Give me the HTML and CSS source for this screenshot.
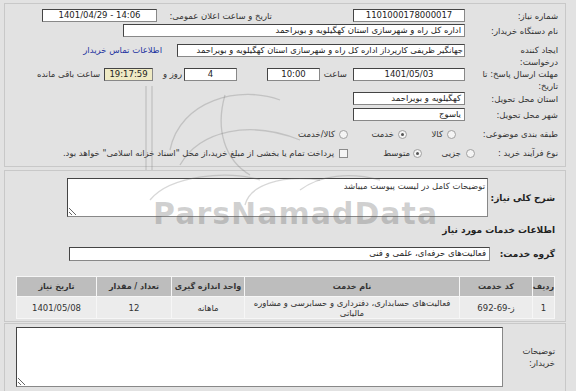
FILE: index.html
```html
<!DOCTYPE html>
<html dir="rtl" lang="fa">
<head>
<meta charset="utf-8">
<link rel="stylesheet" href="styles.css">
</head>
<body>
<div class="panel p1">
  <div class="row r1">
    <span class="lbl">شماره نیاز:</span>
    <span class="box w112 ltr">1101000178000017</span>
    <span class="lbl2">تاریخ و ساعت اعلان عمومی:</span>
    <span class="box w115 ltr ml">1401/04/29 - 14:06</span>
  </div>
  <div class="row r2">
    <span class="lbl">نام دستگاه خریدار:</span>
    <span class="box w342">اداره کل راه و شهرسازی استان کهگیلویه و بویراحمد</span>
  </div>
  <div class="row r3">
    <span class="lbl two">ایجاد کننده<br>درخواست:</span>
    <span class="box w288 tight">جهانگیر ظریفی کارپرداز اداره کل راه و شهرسازی استان کهگیلویه و بویراحمد</span>
    <span class="link">اطلاعات تماس خریدار</span>
  </div>
  <div class="row r4">
    <span class="lbl two">مهلت ارسال پاسخ: تا<br>تاریخ:</span>
    <span class="box w112 ltr">1401/05/03</span>
    <span class="t-hour">ساعت</span>
    <span class="box w53 ltr">10:00</span>
    <span class="box w53 ltr gap30">4</span>
    <span class="t-day">روز و</span>
    <span class="box w49 ltr yellow">19:17:59</span>
    <span class="t-rem">ساعت باقی مانده</span>
  </div>
  <div class="row r5">
    <span class="lbl">استان محل تحویل:</span>
    <span class="box w112">کهگیلویه و بویراحمد</span>
  </div>
  <div class="row r6">
    <span class="lbl">شهر محل تحویل:</span>
    <span class="box w112">یاسوج</span>
  </div>
  <div class="row r7">
    <span class="lbl">طبقه بندی موضوعی:</span>
    <span class="radio first7"></span><span class="opt o-kala">کالا</span>
    <span class="radio on"></span><span class="opt o-khedmat">خدمت</span>
    <span class="radio"></span><span class="opt o-both">کالا/خدمت</span>
  </div>
  <div class="row r8">
    <span class="lbl lbl8">نوع فرآیند خرید :</span>
    <span class="radio"></span><span class="opt o-jozi">جزیی</span>
    <span class="radio on"></span><span class="opt o-mot">متوسط</span>
    <span class="check"></span><span class="opt o-pay">پرداخت تمام یا بخشی از مبلغ خرید،از محل "اسناد خزانه اسلامی" خواهد بود.</span>
  </div>
</div>

<div class="panel p2">
  <div class="row desc">
    <span class="blbl w67">شرح کلی نیاز:</span>
    <textarea class="area a1" readonly>توضیحات کامل در لیست پیوست میباشد</textarea>
  </div>
  <div class="section">اطلاعات خدمات مورد نیاز</div>
  <div class="row grp">
    <span class="blbl w65">گروه خدمت:</span>
    <span class="box w421">فعالیت‌های حرفه‌ای، علمی و فنی</span>
  </div>
  <table class="items">
    <colgroup>
      <col class="c1"><col class="c2"><col class="c3"><col class="c4"><col class="c5"><col class="c6">
    </colgroup>
    <thead>
      <tr><th>ردیف</th><th>کد خدمت</th><th>نام خدمت</th><th>واحد اندازه گیری</th><th>تعداد / مقدار</th><th>تاریخ نیاز</th></tr>
    </thead>
    <tbody>
      <tr>
        <td>1</td>
        <td class="ltr">ز-69-692</td>
        <td class="name">فعالیت‌های حسابداری، دفترداری و حسابرسی و مشاوره<br>مالیاتی</td>
        <td>ماهانه</td>
        <td>12</td>
        <td>1401/05/08</td>
      </tr>
    </tbody>
  </table>
</div>

<div class="panel p3">
  <div class="row notes">
    <span class="lbl3">توضیحات<br>خریدار:</span>
    <textarea class="area a2" readonly></textarea>
  </div>
</div>

<svg class="wm-art" width="576" height="391" viewBox="0 0 576 391" aria-hidden="true">
  <g fill="none" stroke="rgba(110,110,110,0.28)" stroke-width="1.3">
    <line x1="146" y1="86" x2="146" y2="170"/>
    <line x1="152" y1="86" x2="152" y2="170"/>
    <path d="M170 150 C 180 100, 240 85, 280 100"/>
    <path d="M180 165 C 200 130, 250 120, 300 140"/>
    <path d="M150 200 C 170 175, 230 170, 260 180"/>
    <path d="M245 205 C 250 185, 280 175, 320 180"/>
    <path d="M300 190 C 320 175, 350 172, 380 180"/>
    <path d="M225 95 C 215 130, 225 160, 250 175"/>
  </g>
</svg>
<div class="wm">ParsNamadData</div>
</body>
</html>
```

FILE: styles.css
```css
html, body {
  margin: 0;
  padding: 0;
}
body {
  background: #e2e2e2;
  font-family: "DejaVu Sans", sans-serif;
  font-size: 8.5px;
  color: #333;
  width: 576px;
  height: 391px;
  overflow: hidden;
  position: relative;
}
.panel {
  margin: 0 10px 0 4px;
  border: 1px solid #c8c8c8;
  box-sizing: border-box;
}
.p1 {
  margin-top: 3px;
  height: 164px;
  padding: 5px 7px 0 0;
}
.row {
  display: flex;
  align-items: center;
}
.lbl {
  flex: none;
  width: 93px;
  white-space: nowrap;
  line-height: 12px;
}
.lbl.two {
  align-self: flex-start;
  line-height: 12px;
  padding-top: 0;
}
.box {
  flex: none;
  box-sizing: border-box;
  height: 13px;
  line-height: 11px;
  background: #fff;
  border: 1px solid #4a4a4a;
  border-color: #444 #888 #888 #444;
  padding: 0 3px;
  white-space: nowrap;
  overflow: hidden;
  color: #222;
  font-size: 8.5px;
}
.tight {
  padding: 0 1px;
  font-size: 8.3px;
}
.ltr {
  direction: ltr;
  text-align: center;
}
.w112 { width: 112px; }
.w115 { width: 115px; }
.w342 { width: 342px; }
.w288 { width: 288px; }
.w53 { width: 53px; }
.w49 { width: 49px; }
.w421 { width: 421px; height: 14px; }
.yellow { background: #efeac4; }
.lbl2 {
  margin-right: 81px;
  width: 110px;
  white-space: nowrap;
  flex: none;
}
.ml { margin-right: 5px; }
.r1 { height: 13px; }
.r2 { height: 13px; margin-top: 2px; }
.r3 { height: 22px; margin-top: 7px; align-items: flex-start; }
.r4 { height: 22px; margin-top: 2px; align-items: flex-start; }
.r5 { height: 13px; margin-top: 2px; }
.r6 { height: 13px; margin-top: 3px; }
.r7 { height: 16px; margin-top: 5px; }
.r8 { height: 16px; margin-top: 3px; }
.link {
  margin-right: 15px;
  color: #2233a0;
  white-space: nowrap;
  line-height: 13px;
}
.t-hour {
  width: 25px;
  margin-right: 6px;
  margin-left: 2px;
  white-space: nowrap;
  line-height: 13px;
}
.gap30 { margin-right: 30px; }
.t-day {
  width: 27px;
  margin-right: 2px;
  margin-left: 2px;
  white-space: nowrap;
  line-height: 13px;
}
.t-rem {
  margin-right: 4px;
  white-space: nowrap;
  line-height: 13px;
}
.radio {
  flex: none;
  box-sizing: border-box;
  width: 9px;
  height: 9px;
  border-radius: 50%;
  border: 1px solid #a0a0a0;
  background: #f4f4f4;
  position: relative;
}
.radio.on::after {
  content: "";
  position: absolute;
  left: 2px;
  top: 2px;
  width: 3px;
  height: 3px;
  border-radius: 50%;
  background: #555;
}
.first7 { margin-right: 9px; }
.opt {
  flex: none;
  white-space: nowrap;
  margin-right: 4px;
}
.o-kala { width: 16px; margin-left: 20px; }
.o-khedmat { width: 28px; margin-left: 18px; }
.o-both { width: 46px; }
.lbl8 { width: 83px; }
.o-jozi { width: 22px; margin-left: 17px; margin-right: 5px; }
.o-mot { width: 31px; margin-left: 31px; margin-right: 3px; }
.check {
  flex: none;
  box-sizing: border-box;
  width: 9px;
  height: 9px;
  border: 1px solid #8a8a8a;
  background: #f4f4f4;
}
.o-pay { margin-right: 5px; }

.p2 {
  margin-top: 3px;
  height: 152px;
  padding: 7px 10px 0 11px;
}
.blbl {
  flex: none;
  font-weight: bold;
  font-size: 9px;
  color: #222;
  white-space: nowrap;
}
.w67 { width: 67px; }
.w65 { width: 65px; }
.area {
  display: block;
  box-sizing: border-box;
  margin: 0;
  background: #fff;
  border: 1px solid #555;
  border-color: #444 #888 #888 #444;
  font-family: "DejaVu Sans", sans-serif;
  font-size: 8.5px;
  color: #333;
  padding: 2px 2px;
  resize: both;
  direction: rtl;
  outline: none;
}
.a1 {
  width: 421px;
  height: 39px;
}
.section {
  margin-top: 7px;
  font-weight: bold;
  font-size: 9px;
  color: #222;
  line-height: 12px;
}
.grp {
  margin-top: 11px;
}
.items {
  margin-top: 15px;
  width: 539px;
  table-layout: fixed;
  border-collapse: separate;
  border-spacing: 1px;
  background: #f6f6f6;
  font-size: 8.5px;
}
.c1 { width: 21px; }
.c2 { width: 72px; }
.c3 { width: 214px; }
.c4 { width: 72px; }
.c5 { width: 74px; }
.c6 { width: 79px; }
.items th {
  background: #bdbdbd;
  height: 19px;
  padding: 0;
  font-size: 8px;
  font-weight: bold;
  color: #333;
  text-align: center;
  white-space: nowrap;
}
.items td {
  background: #ececec;
  height: 21px;
  padding: 0;
  text-align: center;
  color: #333;
  line-height: 10px;
}
.p3 {
  margin-top: 1px;
  height: 80px;
  padding: 3px 10px 0 11px;
}
.lbl3 {
  flex: none;
  width: 52px;
  line-height: 12px;
  white-space: nowrap;
}
.a2 {
  width: 487px;
  height: 60px;
}
.wm-art {
  position: absolute;
  left: 0;
  top: 0;
  pointer-events: none;
}
.wm {
  position: absolute;
  left: 153px;
  top: 196px;
  font-family: "DejaVu Sans", sans-serif;
  font-weight: bold;
  font-size: 30px;
  letter-spacing: 1px;
  color: rgba(90, 90, 90, 0.28);
  direction: ltr;
  pointer-events: none;
}
```
